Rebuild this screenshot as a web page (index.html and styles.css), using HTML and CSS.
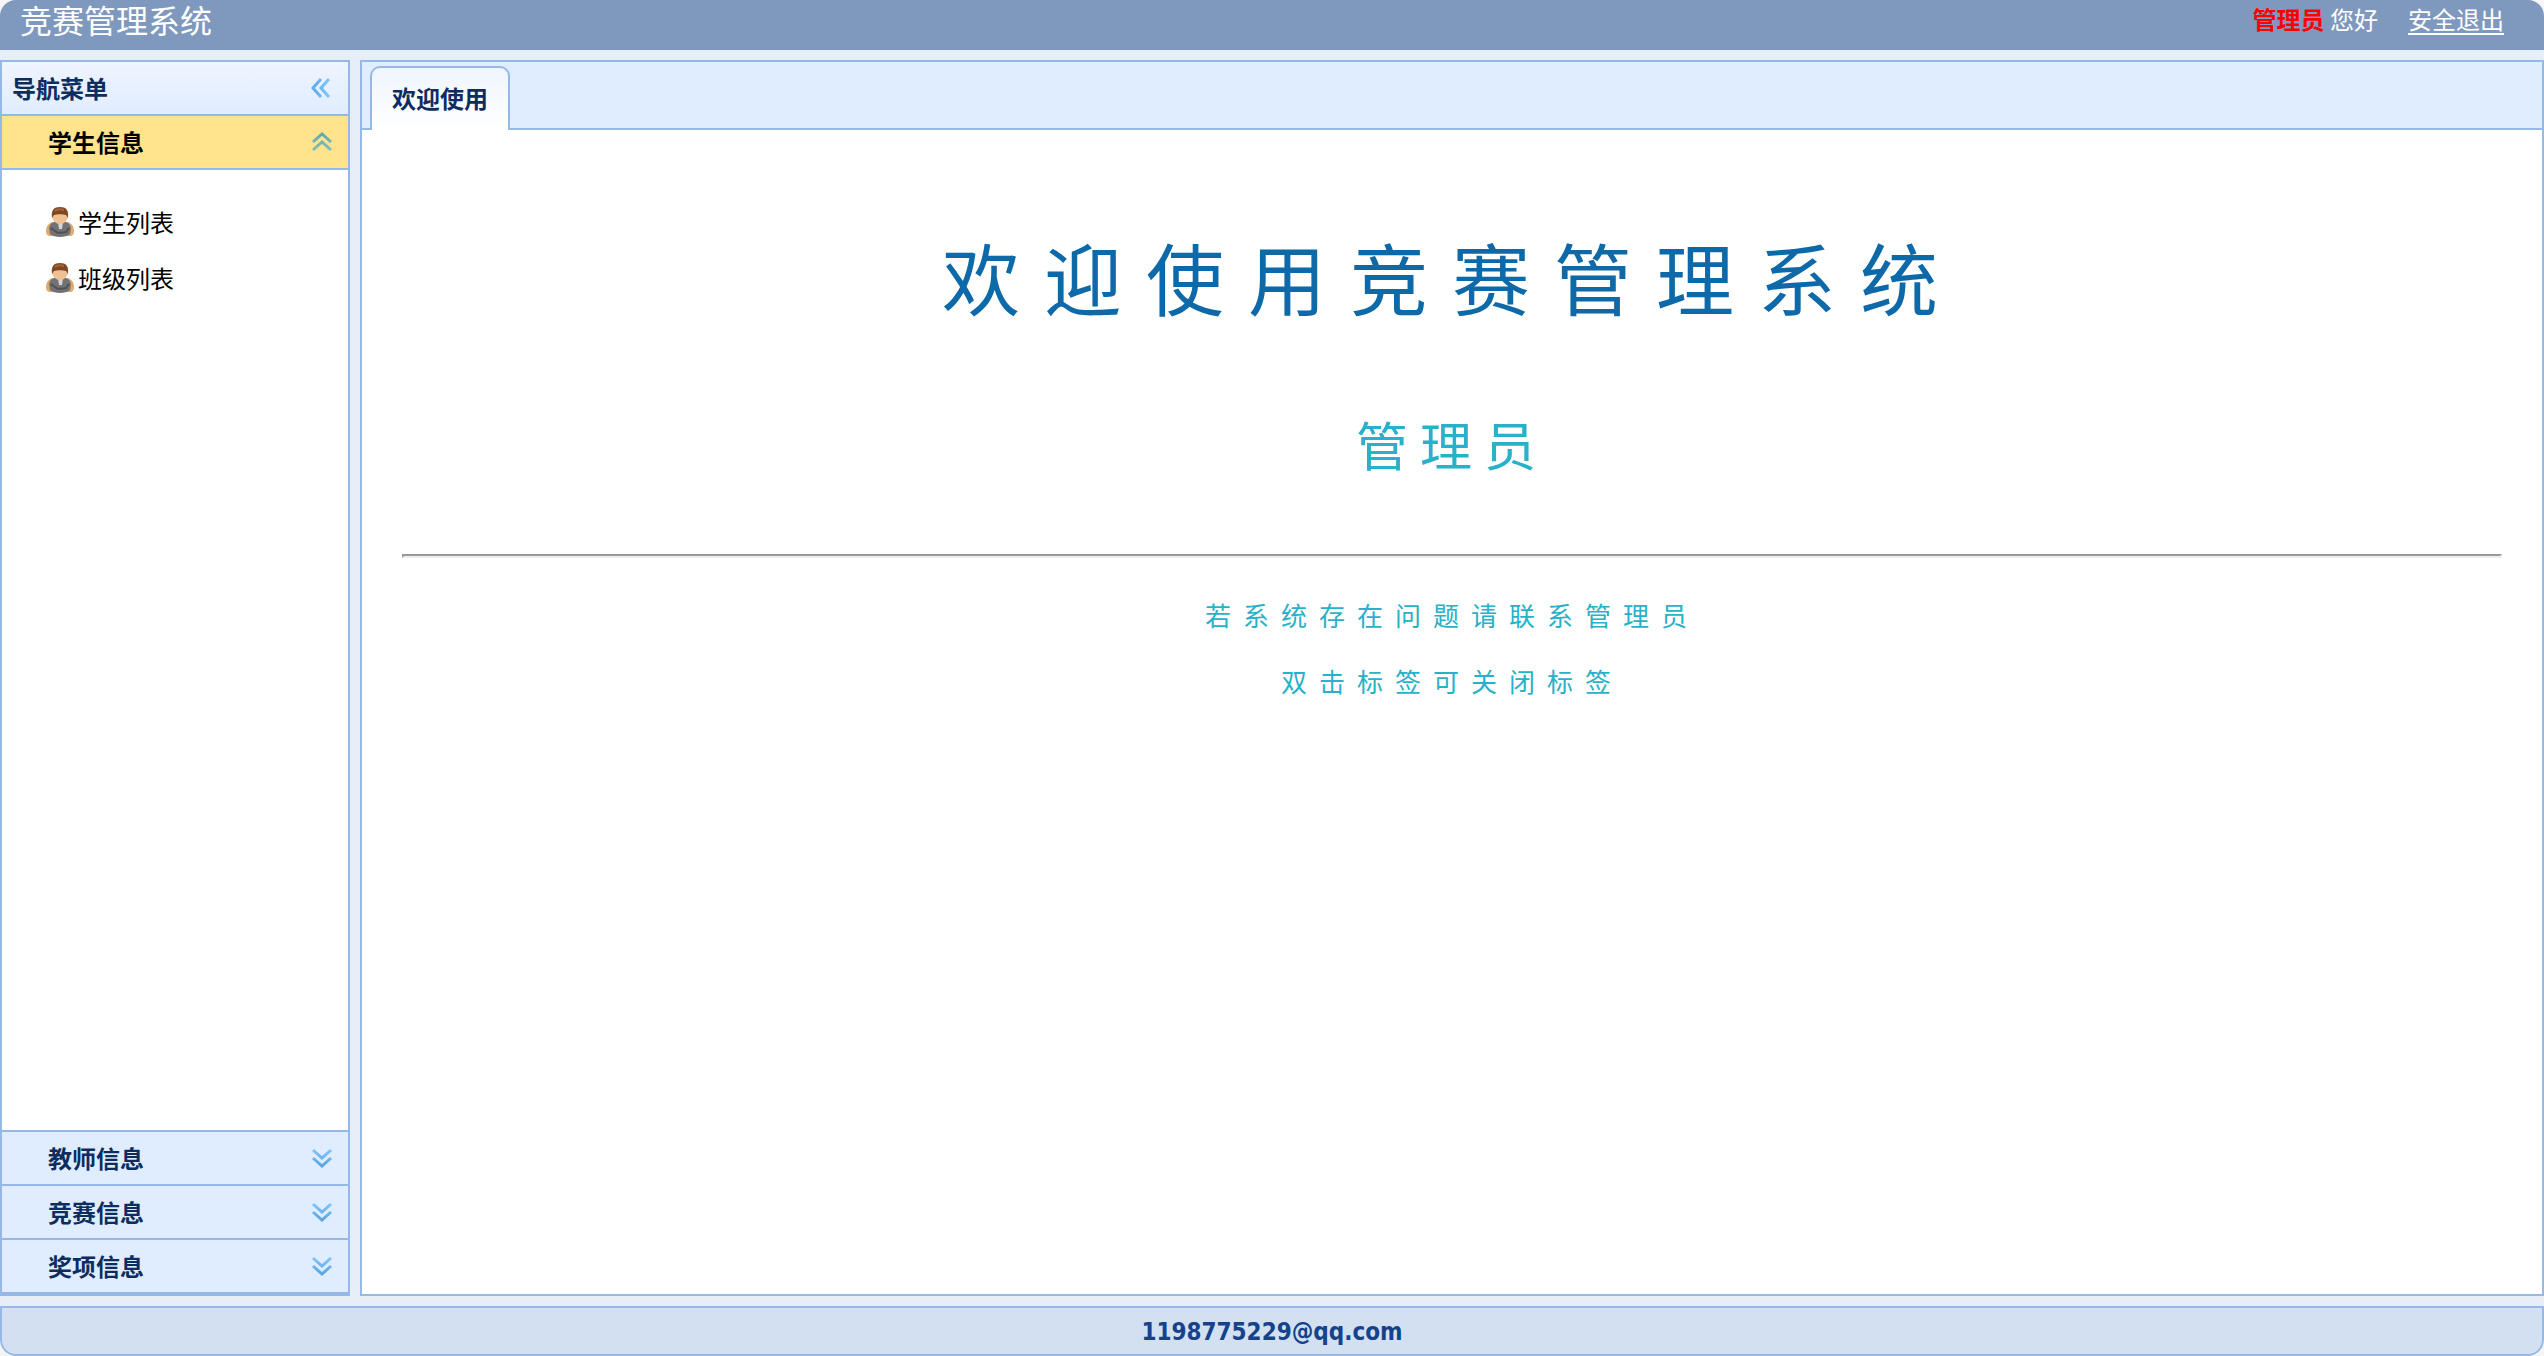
FILE: index.html
```html
<!DOCTYPE html>
<html lang="zh-CN">
<head>
<meta charset="utf-8">
<title>竞赛管理系统</title>
<link rel="stylesheet" href="styles.css">
</head>
<body>
<svg class="defs" aria-hidden="true">
  <defs>
    <linearGradient id="blue" x1="0" y1="0" x2="0" y2="1"><stop offset="0" stop-color="#7cc4fb"/><stop offset="1" stop-color="#5ba6e2"/></linearGradient>
    <linearGradient id="blue-side" x1="0" y1="0" x2="1" y2="0"><stop offset="0" stop-color="#5dabe8"/><stop offset="1" stop-color="#7cc6ff"/></linearGradient>
    <linearGradient id="green" x1="0" y1="0" x2="0" y2="1"><stop offset="0" stop-color="#62a8b0"/><stop offset="1" stop-color="#82bdb4"/></linearGradient>
    <filter id="soft"><feGaussianBlur stdDeviation="0.5"/></filter>
    <symbol id="user" viewBox="0 0 28 30">
      <g filter="url(#soft)">
        <path d="M0 24C0 19 3 16 6 15H22C25 16 28 19 28 24C28 28 26 29 24 29H4C2 29 0 28 0 24Z" fill="#e0a970"/>
        <path d="M3 21C4 16 8 14 14 14S24 16 25 21L24 27C20 31 8 31 4 27Z" fill="#727274"/>
        <path d="M12 15H17L16 22H13Z" fill="#d3d5da"/>
        <path d="M5 21L12 26L20 25L23 21" fill="none" stroke="#515155" stroke-width="2"/>
        <ellipse cx="14" cy="9" rx="8" ry="8" fill="#f0c193"/>
        <path d="M6 11C5 3 8 0 14 0S23 3 22 11L20 8C17 7 11 7 8 8Z" fill="#7d4823"/>
        <path d="M9 4C11 2 15 2 18 3" fill="none" stroke="#a2673a" stroke-width="2"/>
      </g>
    </symbol>
  </defs>
</svg>

<header class="topbar">
  <span class="brand">竞赛管理系统</span>
  <div class="account"><span><strong>管理员</strong> 您好</span><a href="#">安全退出</a></div>
</header>

<div class="workspace">
  <nav class="sidebar" aria-label="导航菜单">
    <div class="side-head">
      <span>导航菜单</span>
      <button class="collapse" type="button" aria-label="收起">
        <svg width="20" height="22" fill="none" stroke="url(#blue-side)" stroke-width="3"><path d="M10 2L2 11L10 20M18 2L10 11L18 20"/></svg>
      </button>
    </div>
    <button class="section active" type="button" aria-expanded="true">
      <span>学生信息</span>
      <svg width="22" height="20" fill="none" stroke="url(#green)" stroke-width="3"><path d="M2 10L11 2L20 10M2 18L11 10L20 18"/></svg>
    </button>
    <ul class="menu">
      <li><a href="#"><svg class="user" aria-hidden="true"><use href="#user"/></svg><span>学生列表</span></a></li>
      <li><a href="#"><svg class="user" aria-hidden="true"><use href="#user"/></svg><span>班级列表</span></a></li>
    </ul>
    <button class="section" type="button" aria-expanded="false">
      <span>教师信息</span>
      <svg width="22" height="20" fill="none" stroke="url(#blue)" stroke-width="3"><path d="M2 2L11 10L20 2M2 10L11 18L20 10"/></svg>
    </button>
    <button class="section" type="button" aria-expanded="false">
      <span>竞赛信息</span>
      <svg width="22" height="20" fill="none" stroke="url(#blue)" stroke-width="3"><path d="M2 2L11 10L20 2M2 10L11 18L20 10"/></svg>
    </button>
    <button class="section" type="button" aria-expanded="false">
      <span>奖项信息</span>
      <svg width="22" height="20" fill="none" stroke="url(#blue)" stroke-width="3"><path d="M2 2L11 10L20 2M2 10L11 18L20 10"/></svg>
    </button>
  </nav>

  <main class="content">
    <div class="tabs" role="tablist"><button class="tab" type="button" role="tab" aria-selected="true">欢迎使用</button></div>
    <section class="welcome">
      <h1>欢迎使用竞赛管理系统</h1>
      <h2>管理员</h2>
      <hr>
      <p>若系统存在问题请联系管理员</p>
      <p>双击标签可关闭标签</p>
    </section>
  </main>
</div>

<footer class="footer">1198775229@qq.com</footer>
</body>
</html>
```
FILE: styles.css
```css
* { box-sizing: border-box; }

html { background: #f5f5f5; }

body {
  display: flex;
  flex-direction: column;
  min-height: 100vh;
  margin: 0;
  border-radius: 16px;
  overflow: hidden;
  background: #e6eef8;
  color: #000;
  font: 24px/32px "Noto Sans CJK SC", sans-serif;
}

button {
  margin: 0;
  padding: 0;
  border: 0;
  background: none;
  color: inherit;
  font: inherit;
  cursor: pointer;
}

.defs { position: absolute; width: 0; height: 0; }

.topbar {
  display: flex;
  justify-content: space-between;
  height: 50px;
  padding: 0 40px 12px 20px;
  align-items: center;
  background: #7f99be;
  color: #fff;
}

.brand { font-size: 32px; }
.account { display: flex; gap: 30px; }
.account strong { color: #f00; }
.account a { color: #fff; text-underline-offset: 4px; }

.workspace {
  display: flex;
  flex: 1;
  gap: 10px;
  padding: 10px 0;
}

.sidebar {
  display: flex;
  flex-direction: column;
  width: 350px;
  border: 2px solid #95b8e7;
  background: #fff;
}

/* Collapsible panel headings share one height and rule. */
.side-head,
.section {
  display: flex;
  align-items: center;
  justify-content: space-between;
  height: 54px;
  padding: 0 15px 0 46px;
  border-bottom: 2px solid #95b8e7;
  background: #e0ecff;
  color: #0e2d5f;
  font-weight: 700;
}

.side-head {
  padding-left: 10px;
  background: linear-gradient(#eff5ff, #e0ecff);
}

.side-head svg,
.section svg { display: block; }

.collapse { padding-right: 2px; }
.section.active { background: #ffe48d; color: #000; }

.menu {
  flex: 1;
  margin: 0;
  padding: 24px 44px;
  border-bottom: 2px solid #95b8e7;
  list-style: none;
}

.menu a {
  display: flex;
  align-items: center;
  gap: 4px;
  height: 56px;
  color: #000;
  text-decoration: none;
}

.user { width: 28px; height: 30px; }

.content {
  flex: 1;
  border: 2px solid #95b8e7;
  background: #fff;
}

.tabs {
  display: flex;
  height: 68px;
  padding: 4px 6px 0;
  border-bottom: 2px solid #95b8e7;
  background: #e0ecff;
}

.tab {
  height: 64px;
  margin: 0 2px -2px;
  padding: 0 20px 2px;
  border: 2px solid #95b8e7;
  border-bottom: 0;
  border-radius: 10px 10px 0 0;
  background: linear-gradient(#eff5ff, #fff);
  color: #0e2d5f;
  font-weight: 700;
}

.welcome {
  padding: 0 40px;
  color: #28b1c8;
  text-align: center;
}

.welcome h1 {
  margin: 0;
  padding: 86px 0 4px;
  color: #0d69a7;
  font-size: 78px;
  font-weight: 400;
  line-height: 120px;
  letter-spacing: 24px;
}

.welcome h2 {
  margin: 0;
  padding: 64px 0;
  font-size: 52px;
  font-weight: 400;
  line-height: 80px;
  letter-spacing: 12px;
}

.welcome hr {
  height: 4px;
  margin: 6px 0 24px;
  border: 2px solid;
  border-color: #9a9a9a #eee #eee #9a9a9a;
}

.welcome p {
  margin: 0;
  font-size: 26px;
  line-height: 66px;
  letter-spacing: 12px;
}

.footer {
  height: 50px;
  padding: 8px;
  border: 2px solid #95b8e7;
  border-radius: 0 0 16px 16px;
  background: #d2e0f2;
  color: #15428b;
  font-family: "DejaVu Sans Condensed", "Noto Sans", sans-serif;
  font-weight: 700;
  line-height: 32px;
  text-align: center;
}
```
